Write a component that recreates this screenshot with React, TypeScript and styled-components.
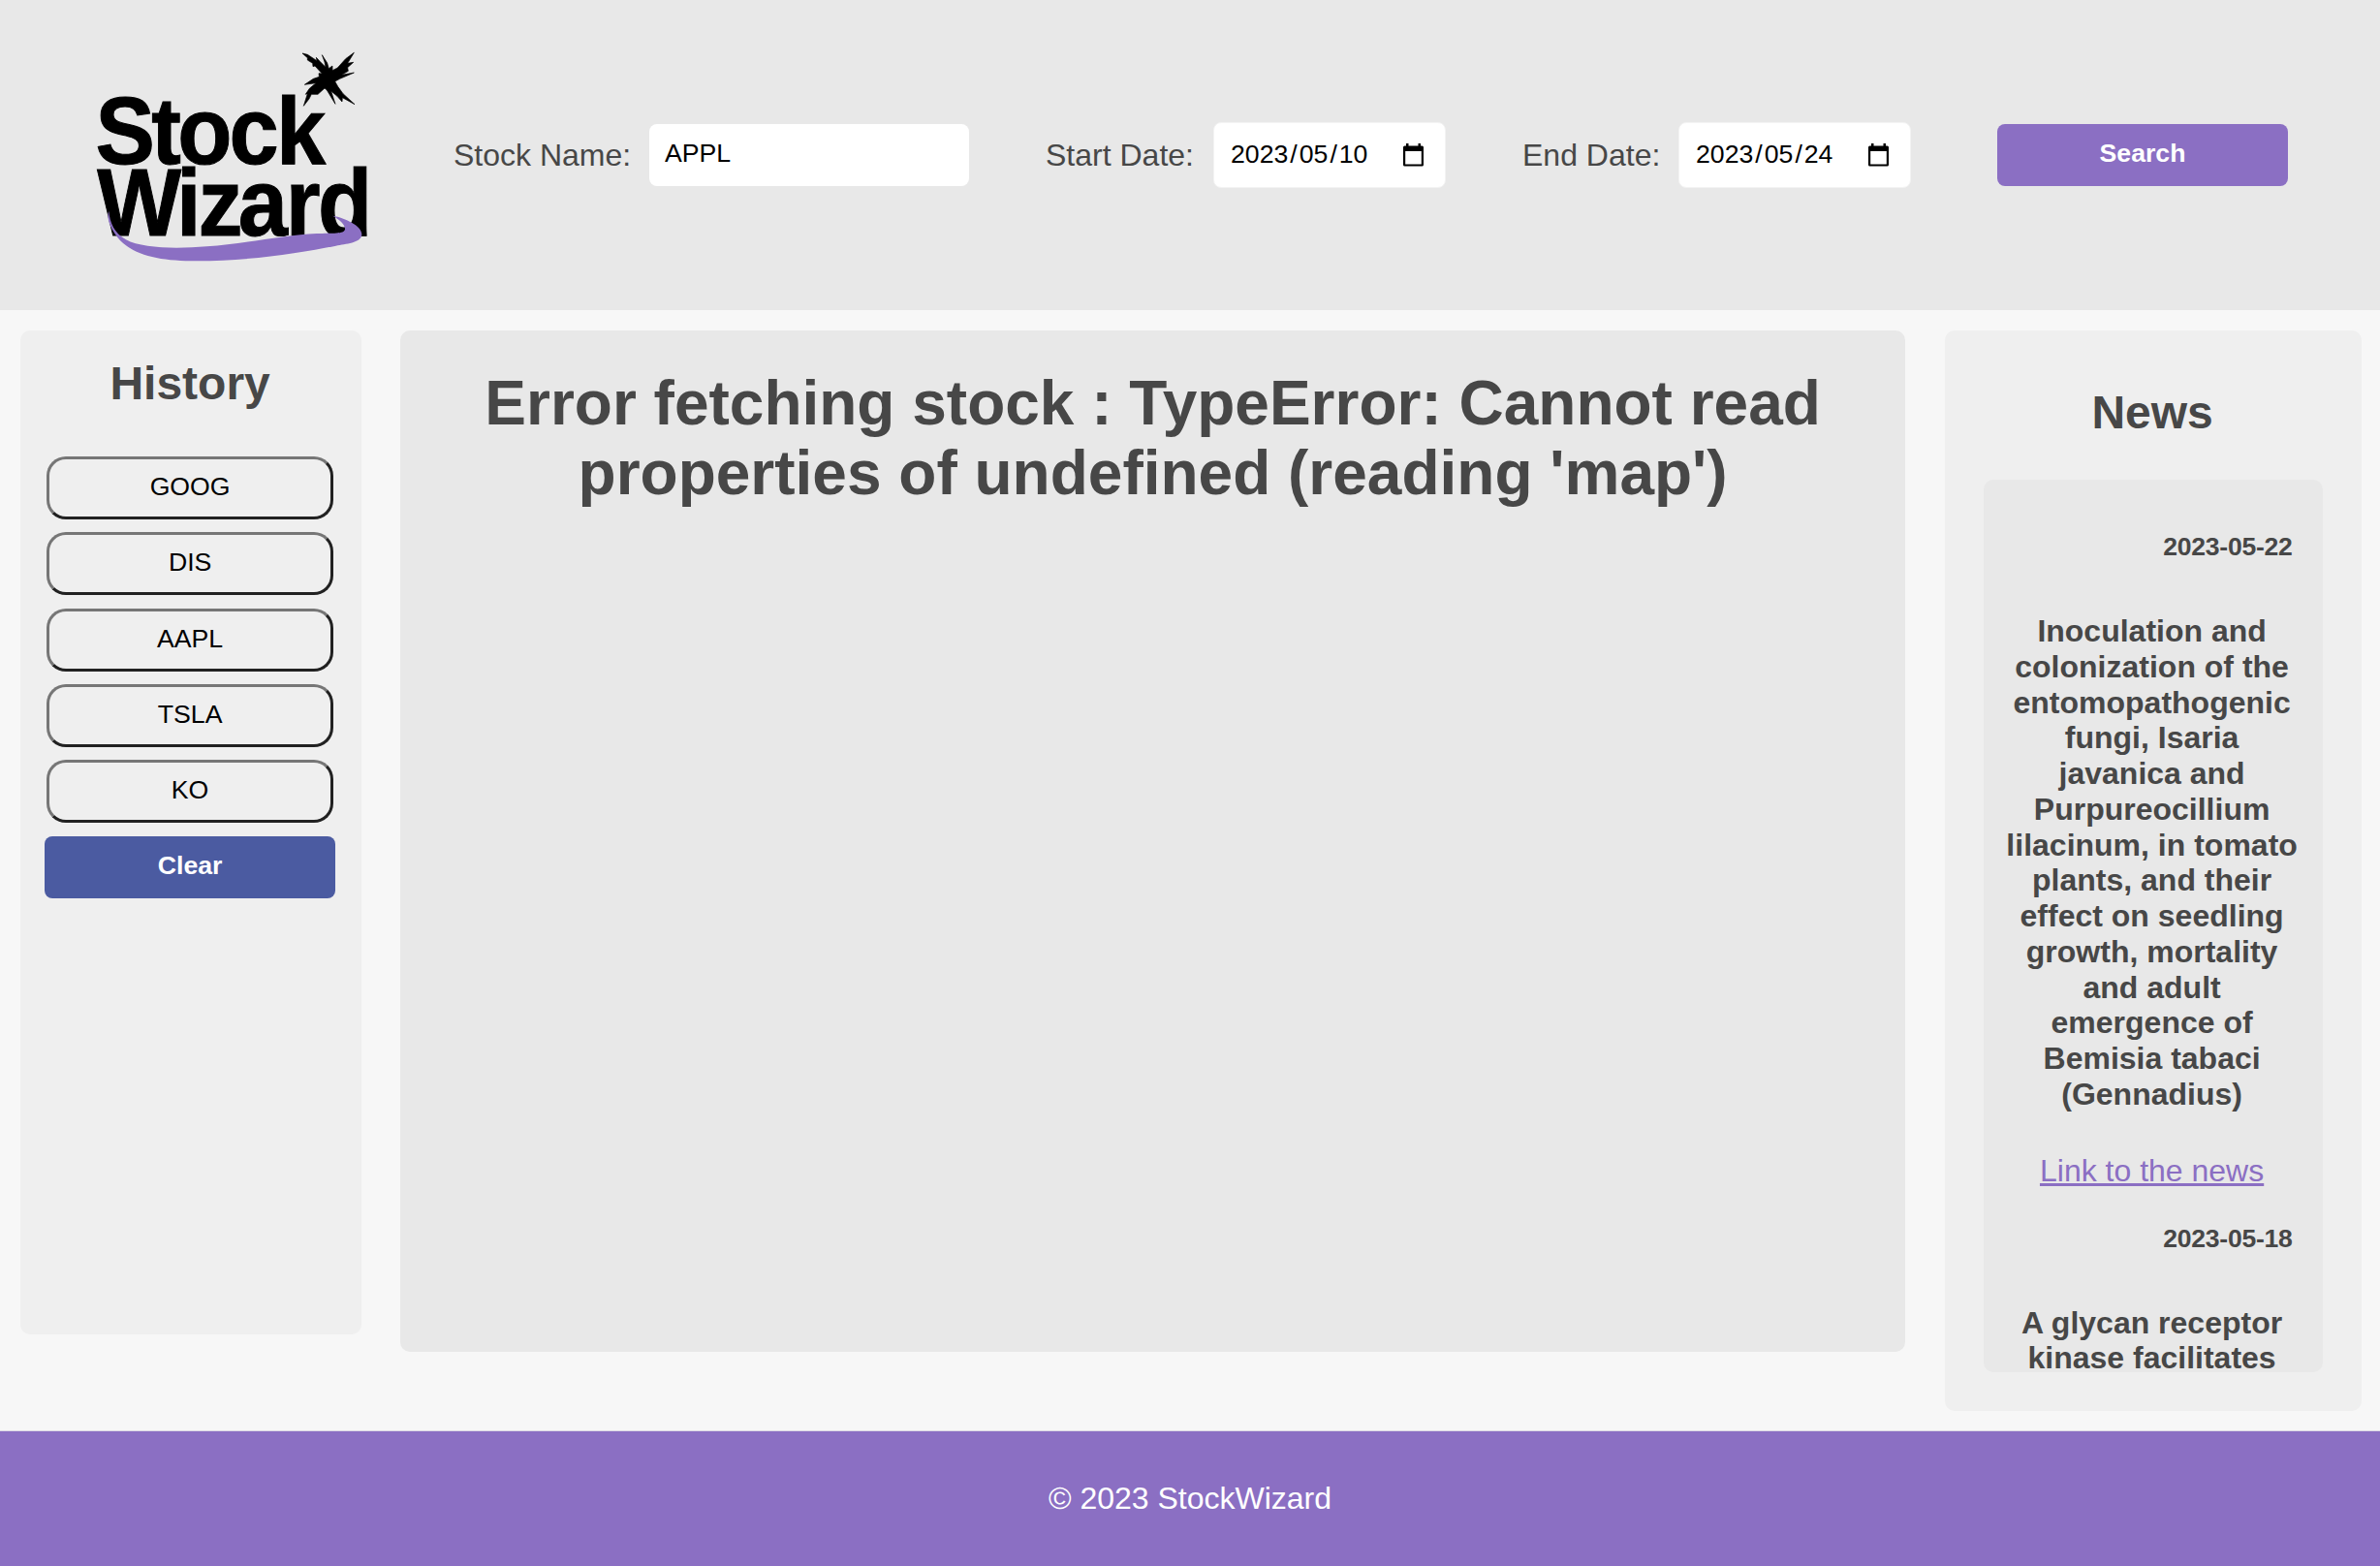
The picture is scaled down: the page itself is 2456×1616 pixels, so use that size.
import React from "react";
import styled, { createGlobalStyle } from "styled-components";

const GlobalStyle = createGlobalStyle`
  *, *::before, *::after { box-sizing: border-box; }
  body {
    margin: 0;
    background: #f7f7f7;
    color: #474747;
    font-family: "Liberation Sans", Arial, Helvetica, sans-serif;
    font-size: 32px;
  }
  h1, h2, h4, h5, p { margin: 0; }
`;

const Page = styled.div`
  display: flex;
  flex-direction: column;
  height: 1616px;
  width: 2456px;
  overflow: hidden;
`;

const Header = styled.header`
  display: flex;
  align-items: center;
  flex: none;
  height: 320px;
  background: #e8e8e8;
`;

const Logo = styled.svg`
  flex: none;
  width: 320px;
  height: 250px;
  margin: 10px 68px 0 80px;
`;

const Field = styled.label<{ $width: number }>`
  display: flex;
  align-items: center;
  justify-content: space-between;
  flex: none;
  width: ${(p) => p.$width}px;
  line-height: 36px;
  white-space: nowrap;
`;

const TextInput = styled.input`
  width: 330px;
  height: 64px;
  padding: 0 16px 3px;
  border: 0;
  border-radius: 8px;
  background: #fff;
  color: #000;
  font: 26.667px "Liberation Sans", Arial, sans-serif;
`;

const DateBox = styled.span`
  display: flex;
  align-items: center;
  justify-content: space-between;
  width: 240px;
  height: 68px;
  padding: 0 22px 3px 15px;
  border: 1px solid #f3f3f3;
  border-radius: 8px;
  background: #fff;
  color: #000;
  font-size: 26.667px;
`;

const DatePart = styled.span`
  padding: 0 2px;
`;

const CalendarIcon = styled.svg`
  width: 21px;
  height: 24px;
  margin-top: 3px;
`;

const Button = styled.button<{ $color: string }>`
  flex: none;
  width: 300px;
  height: 64px;
  padding: 0 0 3px;
  border: 0;
  border-radius: 8px;
  background: ${(p) => p.$color};
  color: #fff;
  font: bold 26.667px "Liberation Sans", Arial, sans-serif;
`;

const Spacer = styled.div<{ $width: number }>`
  flex: none;
  width: ${(p) => p.$width}px;
`;

const Main = styled.main`
  display: grid;
  grid-template-columns: 352px 1553px 430px;
  column-gap: 40.5px;
  align-items: start;
  flex: none;
  height: 1156px;
  padding: 21px 0 0 20.6px;
`;

const Panel = styled.section<{ $height: number; $shade: string }>`
  display: flex;
  flex-direction: column;
  align-items: center;
  height: ${(p) => p.$height}px;
  border-radius: 10px;
  background: ${(p) => p.$shade};
`;

const PanelTitle = styled.h2<{ $top: number; $bottom: number }>`
  padding: ${(p) => p.$top}px 1px ${(p) => p.$bottom}px 0;
  font-size: 48px;
  line-height: 55px;
`;

const HistoryList = styled.div`
  display: flex;
  flex-direction: column;
  align-items: center;
  gap: 13.33px;
  padding-right: 1px;
`;

const HistoryButton = styled.button`
  width: 296px;
  height: 65px;
  padding: 0 0 2px;
  border: 3px solid;
  border-color: #767676 #212121 #212121 #767676;
  border-radius: 20px;
  background: #efefef;
  color: #000;
  font: 26.667px "Liberation Sans", Arial, sans-serif;
`;

const ErrorTitle = styled.h1`
  padding-top: 39px;
  width: 1460px;
  font-size: 64px;
  line-height: 72px;
  text-align: center;
`;

const NewsList = styled.div`
  width: 350px;
  height: 921px;
  padding: 54px 20px 0;
  overflow: hidden;
  border-radius: 10px;
  background: #e8e8e8;
`;

const Article = styled.article`
  display: flex;
  flex-direction: column;
  align-items: center;
`;

const ArticleDate = styled.h5`
  align-self: flex-end;
  padding-right: 11px;
  font-size: 26.56px;
  letter-spacing: -0.25px;
  line-height: 31px;
`;

const ArticleTitle = styled.h4`
  margin: 53px 0 42px;
  width: 310px;
  padding-right: 2px;
  font-size: 32px;
  line-height: 36.77px;
  text-align: center;
`;

const ArticleLink = styled.a`
  margin-bottom: 36px;
  padding-right: 2px;
  color: #8b6fc3;
  line-height: 37px;
  text-decoration-thickness: 3px;
`;

const Footer = styled.footer`
  display: flex;
  align-items: center;
  justify-content: center;
  flex: 1;
  border-top: 1px solid #dcd9e4;
  background: #8b6fc3;
  color: #fff;
`;

const news = [
  {
    date: "2023-05-22",
    title:
      "Inoculation and colonization of the entomopathogenic fungi, Isaria javanica and Purpureocillium lilacinum, in tomato plants, and their effect on seedling growth, mortality and adult emergence of Bemisia tabaci (Gennadius)",
  },
  { date: "2023-05-18", title: "A glycan receptor kinase facilitates" },
];

function StockWizardLogo() {
  return (
    <Logo viewBox="0 0 960 750" aria-label="Stock Wizard">
      <g
        fontFamily="'Liberation Sans', Arial, sans-serif"
        fontWeight="bold"
        fontSize="297"
        stroke="#000"
        strokeWidth="3"
        transform="scale(0.93 1)"
      >
        <text x="60 246 333 505 661" y="387">Stock</text>
        <text x="65 329 402 535 693 800" y="609">Wizard</text>
      </g>
      <path
        fill="#000"
        d="M696 45L712 49L741 68L739 58L750 70L768 88L765 72L757 50L773 75L778 92L789 84L789 98L805 90L830 62L856 43L836 76L854 73L836 89L838 100L818 112L856 105L812 124L797 132L806 148L822 170L858 203L820 182L819 195L804 178L785 162L798 202L772 159L765 153L744 172L724 172L717 186L700 208L712 170L706 172L718 154L738 137L703 142L730 124L748 118L747 107L757 108L735 84L729 86L728 76L712 66L712 59Z"
        stroke="#000"
        strokeWidth="2"
      />
      <path
        fill="#8b6fc3"
        d="M790 548C830 555 882 580 880 607C877 633 830 635 800 641C690 663 530 688 370 688C255 688 170 672 124 615C100 583 89 555 97 533C100 570 113 600 150 622C200 650 310 650 400 643C520 634 640 608 740 603C790 601 825 605 828 590C829 575 812 561 790 548Z"
      />
    </Logo>
  );
}

function DateInput({ value }: { value: string }) {
  const [year, month, day] = value.split("/");
  return (
    <DateBox>
      <span>
        <DatePart>{year}</DatePart>/<DatePart>{month}</DatePart>/<DatePart>{day}</DatePart>
      </span>
      <CalendarIcon viewBox="0 0 21 24">
        <path
          fill="#000"
          fillRule="evenodd"
          d="M3 0h2.500v2.500h10V0H18v2.500h1.500q1.500 0 1.500 1.500v18q0 1.500-1.500 1.500h-18q-1.500 0-1.500-1.500v-18q0-1.500 1.500-1.500H3zM2.200 8v13.500h16.600V8z"
        />
      </CalendarIcon>
    </DateBox>
  );
}

export default function App() {
  return (
    <Page>
      <GlobalStyle />
      <Header>
        <StockWizardLogo />
        <Field $width={532}>
          Stock Name:
          <TextInput defaultValue="APPL" />
        </Field>
        <Spacer $width={79} />
        <Field $width={413}>
          Start Date:
          <DateInput value="2023/05/10" />
        </Field>
        <Spacer $width={79} />
        <Field $width={401}>
          End Date:
          <DateInput value="2023/05/24" />
        </Field>
        <Spacer $width={89} />
        <Button $color="#8b6fc3">Search</Button>
      </Header>
      <Main>
        <Panel $height={1036} $shade="#efefef">
          <PanelTitle $top={27} $bottom={48}>History</PanelTitle>
          <HistoryList>
            {["GOOG", "DIS", "AAPL", "TSLA", "KO"].map((name) => (
              <HistoryButton key={name}>{name}</HistoryButton>
            ))}
            <Button $color="#4b5ba1">Clear</Button>
          </HistoryList>
        </Panel>
        <Panel $height={1054} $shade="#e8e8e8">
          <ErrorTitle>
            Error fetching stock : TypeError: Cannot read properties of undefined (reading 'map')
          </ErrorTitle>
        </Panel>
        <Panel $height={1115} $shade="#efefef">
          <PanelTitle $top={57} $bottom={42}>News</PanelTitle>
          <NewsList>
            {news.map((item) => (
              <Article key={item.date}>
                <ArticleDate>{item.date}</ArticleDate>
                <ArticleTitle>{item.title}</ArticleTitle>
                <ArticleLink href="#">Link to the news</ArticleLink>
              </Article>
            ))}
          </NewsList>
        </Panel>
      </Main>
      <Footer>© 2023 StockWizard</Footer>
    </Page>
  );
}
